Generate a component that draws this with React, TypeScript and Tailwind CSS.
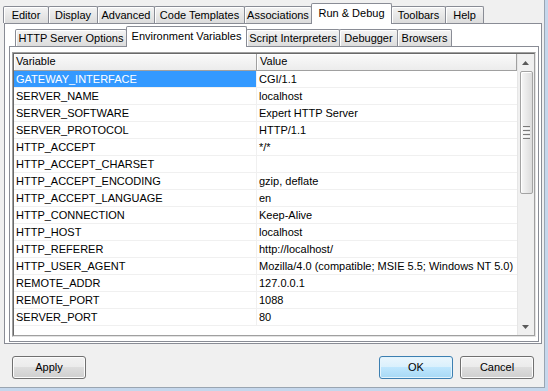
import React from 'react';

const outerTabs = [
  { label: 'Editor', w: 'w-[46px]' },
  { label: 'Display', w: 'w-[50px]' },
  { label: 'Advanced', w: 'w-[58px]' },
  { label: 'Code Templates', w: 'w-[91px]' },
  { label: 'Associations', w: 'w-[68px]' },
  { label: 'Run & Debug', w: 'w-[81px]', active: true },
  { label: 'Toolbars', w: 'w-[55px]' },
  { label: 'Help', w: 'w-[39px]' },
];

const innerTabs = [
  { label: 'HTTP Server Options', w: 'w-[112px]' },
  { label: 'Environment Variables', w: 'w-[121px]', active: true },
  { label: 'Script Interpreters', w: 'w-[94px]' },
  { label: 'Debugger', w: 'w-[59px]' },
  { label: 'Browsers', w: 'w-[55px]' },
];

const rows = [
  ['GATEWAY_INTERFACE', 'CGI/1.1'],
  ['SERVER_NAME', 'localhost'],
  ['SERVER_SOFTWARE', 'Expert HTTP Server'],
  ['SERVER_PROTOCOL', 'HTTP/1.1'],
  ['HTTP_ACCEPT', '*/*'],
  ['HTTP_ACCEPT_CHARSET', ''],
  ['HTTP_ACCEPT_ENCODING', 'gzip, deflate'],
  ['HTTP_ACCEPT_LANGUAGE', 'en'],
  ['HTTP_CONNECTION', 'Keep-Alive'],
  ['HTTP_HOST', 'localhost'],
  ['HTTP_REFERER', 'http://localhost/'],
  ['HTTP_USER_AGENT', 'Mozilla/4.0 (compatible; MSIE 5.5; Windows NT 5.0)'],
  ['REMOTE_ADDR', '127.0.0.1'],
  ['REMOTE_PORT', '1088'],
  ['SERVER_PORT', '80'],
];

function Tab({ label, w, active }: { label: string; w: string; active?: boolean }) {
  if (active) {
    return (
      <div className={`${w} relative z-10 -mr-px -mb-px h-[21px] shrink-0 rounded-t-[2px] border border-b-0 border-[#898c95] bg-white pt-[3px] text-center leading-[13px] whitespace-nowrap`}>
        {label}
      </div>
    );
  }
  return (
    <div className={`${w} -mr-px h-[17px] shrink-0 rounded-t-[2px] border border-b-0 border-[#898c95] bg-gradient-to-b from-[#f4f4f4] to-[#dcdcdc] pt-[2px] text-center leading-[13px] whitespace-nowrap shadow-[inset_1px_1px_0_#ffffff]`}>
      {label}
    </div>
  );
}

function Button({ label, primary }: { label: string; primary?: boolean }) {
  return (
    <button
      className={
        primary
          ? 'flex h-[23px] w-[74px] items-center justify-center rounded-[3px] border border-[#3c7fb1] bg-[linear-gradient(#eaf6fd_0%,#d9f0fc_50%,#bee6fd_50%,#a7d9f5_100%)] shadow-[inset_0_0_0_1px_#e4f4fc] leading-[13px]'
          : 'flex h-[23px] w-[74px] items-center justify-center rounded-[3px] border border-[#707070] bg-[linear-gradient(#f2f2f2_0%,#ebebeb_50%,#dddddd_50%,#cfcfcf_100%)] shadow-[inset_0_0_0_1px_#fcfcfc] leading-[13px]'
      }
    >
      {label}
    </button>
  );
}

function Arrow({ up }: { up?: boolean }) {
  return (
    <svg width="7" height="4" viewBox="0 0 7 4">
      {up ? <polygon points="3.5,0 7,4 0,4" fill="#5a5a5a" /> : <polygon points="0,0 7,0 3.5,4" fill="#5a5a5a" />}
    </svg>
  );
}

export default function App() {
  return (
    <div className="h-[391px] w-[548px] overflow-hidden bg-[#c5d7ec] font-['Liberation_Sans',Arial,sans-serif] text-[11px] text-black">
      <div className="flex h-[388px] w-[545px] flex-col border-r border-b border-[#9aa5b1] bg-[#f0f0f0]">
        {/* Outer tab control */}
        <div className="pl-[3px] pt-[3px]">
          <div className="flex h-[20px] items-end">
            {outerTabs.map((t) => (
              <Tab key={t.label} {...t} />
            ))}
          </div>
          <div className="ml-[1px] h-[321px] w-[538px] border border-[#898c95] bg-white pt-[2px] pl-[4px] pr-[2px] pb-[1px]">
            {/* Inner tab control */}
            <div className="ml-[6px] flex h-[20px] items-end">
              {innerTabs.map((t) => (
                <Tab key={t.label} {...t} />
              ))}
            </div>
            <div className="h-[296px] w-[530px] border border-[#898c95] bg-white pt-[5px] pl-[2px] pr-[2px] pb-[4px]">
              {/* List view */}
              <div className="h-[285px] w-[524px] border border-[#a0a0a0] border-r-[#e3e3e3] border-b-[#e3e3e3]">
                <div className="flex h-full w-full border border-[#696969] border-r-[#a0a0a0] border-b-[#a0a0a0] bg-white">
                  <div className="flex-1">
                    <div className="flex h-[17px] border-b border-[#a0a0a0] bg-gradient-to-b from-[#fafafa] to-[#ececec]">
                      <div className="w-[243px] border-r border-[#a0a0a0] pl-[2px] pt-[1px] leading-[13px] shadow-[inset_1px_1px_0_#ffffff]">Variable</div>
                      <div className="w-[260px] border-r border-[#a0a0a0] pl-[3px] pt-[1px] leading-[13px] shadow-[inset_1px_1px_0_#ffffff]">Value</div>
                    </div>
                    {rows.map(([k, v], i) => (
                      <div key={k} className="flex h-[17px] border-b border-[#f0f0f0]">
                        <div className={`w-[242px] pl-[2px] leading-[17px] whitespace-nowrap ${i === 0 ? 'bg-[#3399ff] text-white' : ''}`}>{k}</div>
                        <div className="w-[261px] border-l border-[#f0f0f0] pl-[2px] leading-[17px] whitespace-nowrap">{v}</div>
                      </div>
                    ))}
                  </div>
                  {/* Scrollbar */}
                  <div className="flex w-[17px] flex-col border-l border-[#e6e6e6] bg-[#f0f0f0]">
                    <div className="flex h-[17px] items-center justify-center pr-[1px]">
                      <Arrow up />
                    </div>
                    <div className="ml-[2px] mr-[1px] flex h-[123px] flex-col items-center justify-center gap-[1px] rounded-[2px] border border-[#a3a3a3] bg-gradient-to-r from-[#f7f7f7] to-[#dcdcdc] shadow-[inset_1px_1px_0_#ffffff]">
                      <div className="h-[1px] w-[7px] bg-[#7a7a7a]" />
                      <div className="h-[1px] w-[7px] bg-[#f8f8f8]" />
                      <div className="h-[1px] w-[7px] bg-[#7a7a7a]" />
                      <div className="h-[1px] w-[7px] bg-[#f8f8f8]" />
                      <div className="h-[1px] w-[7px] bg-[#7a7a7a]" />
                      <div className="h-[1px] w-[7px] bg-[#f8f8f8]" />
                      <div className="h-[1px] w-[7px] bg-[#7a7a7a]" />
                    </div>
                    <div className="flex-1" />
                    <div className="flex h-[17px] items-center justify-center pr-[1px]">
                      <Arrow />
                    </div>
                  </div>
                </div>
              </div>
            </div>
          </div>
        </div>
        {/* Buttons */}
        <div className="mt-[12px] flex pl-[12px] pr-[10px]">
          <Button label="Apply" />
          <div className="flex-1" />
          <div className="flex gap-[7px]">
            <Button label="OK" primary />
            <Button label="Cancel" />
          </div>
        </div>
      </div>
    </div>
  );
}
